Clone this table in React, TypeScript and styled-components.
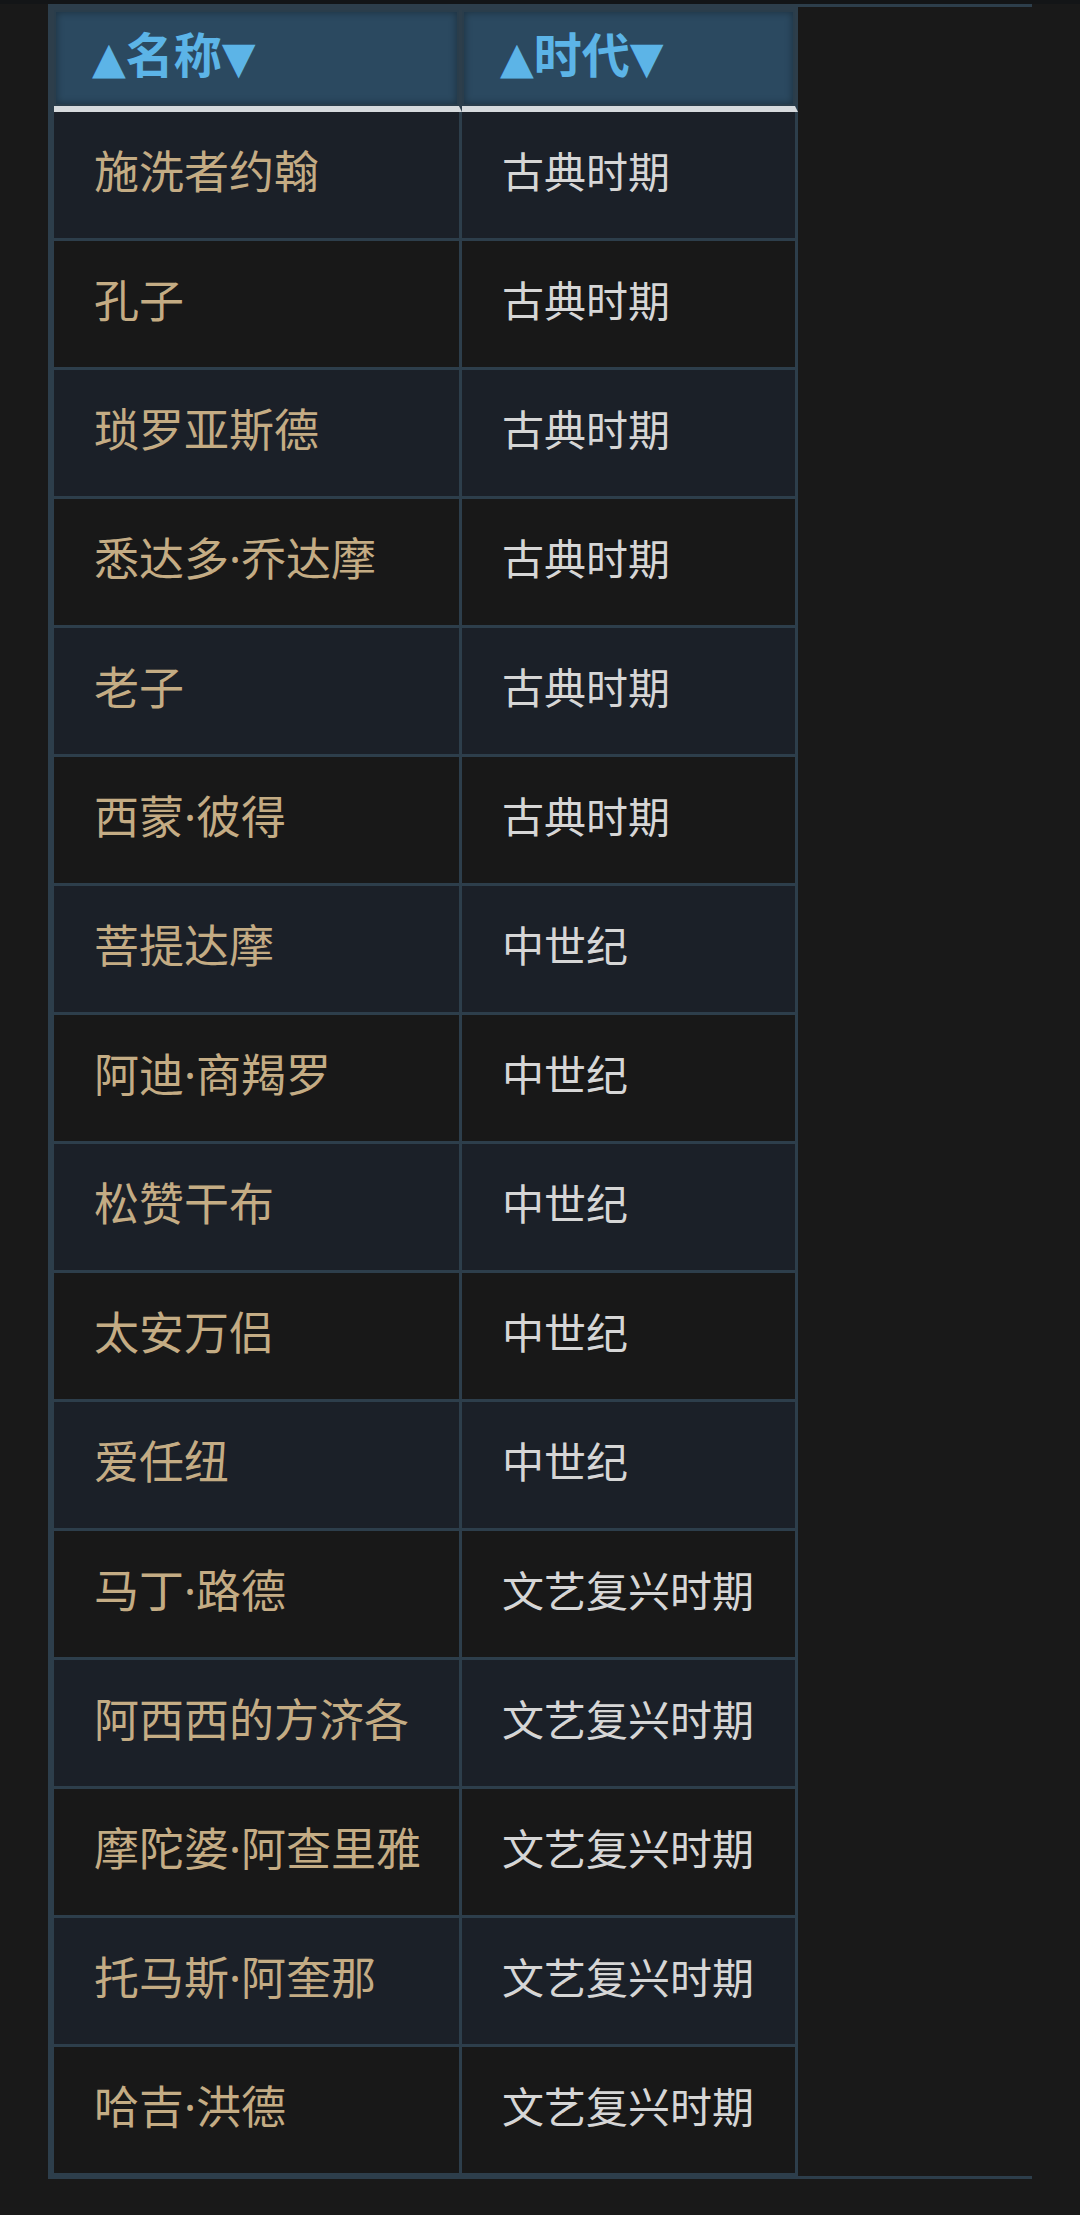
import React from 'react';
import styled, {createGlobalStyle} from 'styled-components';

const FRAME = '#2d3e4b';

const GlobalStyle = createGlobalStyle`
  html, body {
    margin: 0;
    padding: 0;
    background: #191919;
  }
  body {
    font-family: "Noto Sans", "Noto Sans CJK SC", sans-serif;
  }
`;

const Page = styled.div`
  min-height: 2215px;
  background: #191919;
`;

const TopBand = styled.div`
  height: 4px;
  background: #131517;
`;

const TableWrap = styled.div`
  margin-left: 48px;
  width: 984px;
  box-sizing: border-box;
  border-top: 3px solid ${FRAME};
  border-bottom: 3px solid ${FRAME};
  border-left: 3px solid ${FRAME};
`;

const Table = styled.table`
  border-collapse: separate;
  border-spacing: 0;
  table-layout: fixed;
  width: 744px;
  border-left: 3px solid ${FRAME};
  border-top: 3px solid ${FRAME};
`;

const HeadCell = styled.th<{ $width: number }>`
  box-sizing: border-box;
  width: ${p => p.$width}px;
  height: 102px;
  padding: 0 0 6px 38px;
  text-align: left;
  vertical-align: middle;
  background: #2b4960;
  color: #5cb4e7;
  font-size: 48px;
  font-weight: 700;
  line-height: 1.2;
  border-right: 3px solid ${FRAME};
  border-bottom: 6px solid #d6dadd;
  box-shadow: inset 0 0 0 2px #2a3d4b, inset 0 0 7px 3px rgba(0, 0, 0, 0.3);
  white-space: nowrap;
`;

const Arrow = styled.span`
  font-family: "DejaVu Sans", sans-serif;
  font-size: 44px;
  font-weight: 400;
`;

const Row = styled.tr<{ $odd: boolean }>`
  background: ${p => (p.$odd ? '#1b2028' : '#181818')};
`;

const Cell = styled.td<{ $name?: boolean }>`
  box-sizing: border-box;
  height: 129px;
  padding: 0 0 6px 40px;
  vertical-align: middle;
  line-height: 1.2;
  border-right: 3px solid ${FRAME};
  border-bottom: 3px solid ${FRAME};
  color: ${p => (p.$name ? '#c4ac84' : '#d6d6d6')};
  font-size: ${p => (p.$name ? 45 : 42)}px;
  white-space: nowrap;
`;

const rows: [string, string][] = [
  ['施洗者约翰', '古典时期'],
  ['孔子', '古典时期'],
  ['琐罗亚斯德', '古典时期'],
  ['悉达多·乔达摩', '古典时期'],
  ['老子', '古典时期'],
  ['西蒙·彼得', '古典时期'],
  ['菩提达摩', '中世纪'],
  ['阿迪·商羯罗', '中世纪'],
  ['松赞干布', '中世纪'],
  ['太安万侣', '中世纪'],
  ['爱任纽', '中世纪'],
  ['马丁·路德', '文艺复兴时期'],
  ['阿西西的方济各', '文艺复兴时期'],
  ['摩陀婆·阿查里雅', '文艺复兴时期'],
  ['托马斯·阿奎那', '文艺复兴时期'],
  ['哈吉·洪德', '文艺复兴时期'],
];

const SortHead = ({label, width}: {label: string; width: number}) => (
  <HeadCell $width={width}>
    <Arrow>▲</Arrow>{label}<Arrow>▼</Arrow>
  </HeadCell>
);

const App = () => {
  return (
    <Page>
      <GlobalStyle />
      <TopBand />
      <TableWrap>
        <Table>
          <thead>
            <tr>
              <SortHead label="名称" width={408} />
              <SortHead label="时代" width={336} />
            </tr>
          </thead>
          <tbody>
            {rows.map(([name, era], i) => (
              <Row key={name} $odd={i % 2 === 0}>
                <Cell $name>{name}</Cell>
                <Cell>{era}</Cell>
              </Row>
            ))}
          </tbody>
        </Table>
      </TableWrap>
    </Page>
  );
};

export default App;
